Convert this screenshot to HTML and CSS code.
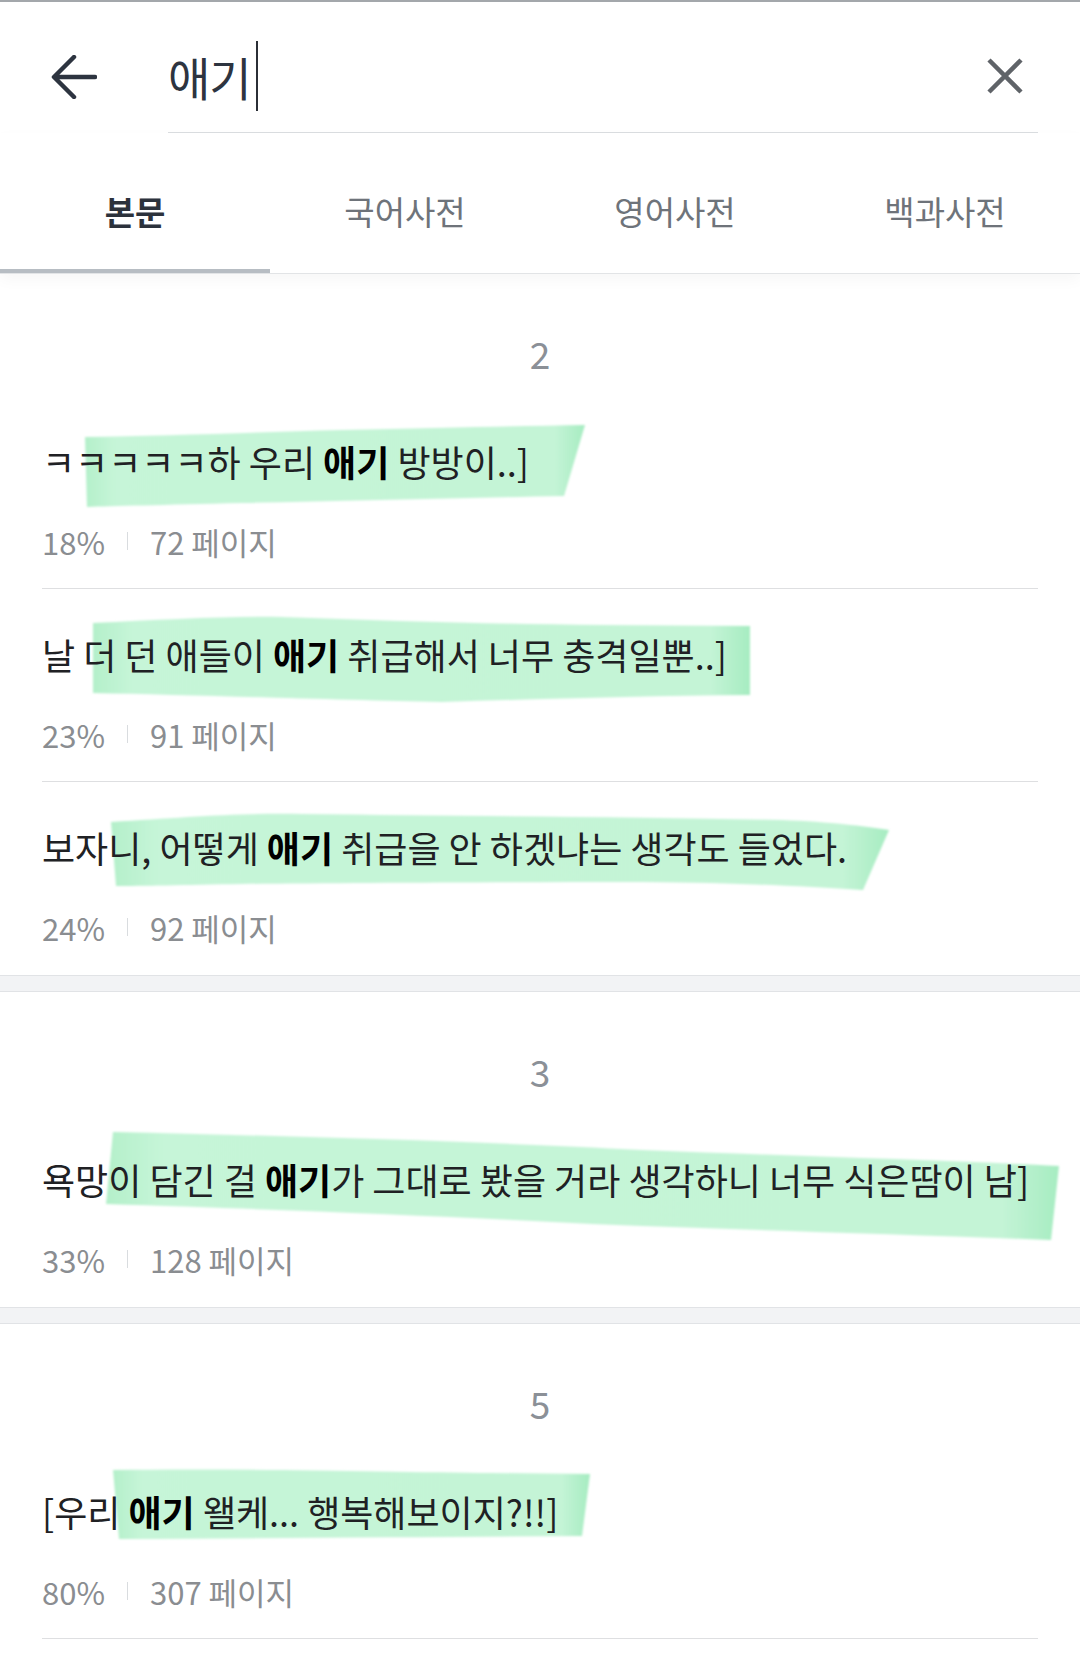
FILE: index.html
```html
<!DOCTYPE html>
<html>

<head>
  <title>본문 검색</title>
  <meta charset="UTF-8">
  <link rel="stylesheet" href="styles.css">
</head>

<body>
  <div class="screen">

    <div class="header">
      <div class="backBtn">
        <svg width="46" height="44" viewBox="0 0 46 44">
          <path d="M44 22 H4 M23 2 L3 22 L23 42" fill="none" stroke="#2d3440" stroke-width="4.5" stroke-linecap="round" stroke-linejoin="round" />
        </svg>
      </div>
      <div class="searchField">
        <span class="query">애기</span><span class="cursor"></span>
        <svg class="clearBtn" width="38" height="38" viewBox="0 0 38 38">
          <path d="M3 3 L35 35 M35 3 L3 35" stroke="#5f6368" stroke-width="4.5" />
        </svg>
      </div>
    </div>

    <div class="tabs">
      <div class="tab active">본문</div>
      <div class="tab">국어사전</div>
      <div class="tab">영어사전</div>
      <div class="tab">백과사전</div>
    </div>

    <!-- chapter 2 -->
    <div class="section">
      <div class="pageNum">2</div>
      <div class="item">
        <div class="line">
          <svg class="mark"><path d="M43 1 C120 0 220 -4 300 -6 C400 -8 480 -10 543 -11 L522 60 C420 62 300 65 200 67 C120 69 70 70 45 71 Z" /></svg>
          ㅋㅋㅋㅋㅋ하 우리 <b>애기</b> 방방이..]
        </div>
        <div class="meta"><span>18%</span><span class="bar"></span><span>72 페이지</span></div>
      </div>
      <div class="item">
        <div class="line">
          <svg class="mark"><path d="M51 -6 C120 -9 180 -13 240 -12 C350 -8 450 -5 560 -4 L708 -3 L708 66 C600 67 500 70 400 73 C300 71 150 66 51 64 Z" /></svg>
          날 더 던 애들이 <b>애기</b> 취급해서 너무 충격일뿐..]
        </div>
        <div class="meta"><span>23%</span><span class="bar"></span><span>91 페이지</span></div>
      </div>
      <div class="item">
        <div class="line">
          <svg class="mark"><path d="M69 0 C140 -4 190 -9 260 -8 C420 -6 600 -5 740 -2 C790 0 820 4 847 8 L821 68 C760 64 700 61 600 60 C450 60 300 61 200 62 C140 63 100 64 74 64 Z" /></svg>
          보자니, 어떻게 <b>애기</b> 취급을 안 하겠냐는 생각도 들었다.
        </div>
        <div class="meta"><span>24%</span><span class="bar"></span><span>92 페이지</span></div>
      </div>
    </div>

    <div class="band"></div>

    <!-- chapter 3 -->
    <div class="section">
      <div class="pageNum">3</div>
      <div class="item">
        <div class="line">
          <svg class="mark"><path d="M71 -22 C250 -18 450 -12 600 -4 C750 2 900 6 1017 12 L1009 86 C850 80 700 76 550 70 C400 62 250 56 64 50 Z" /></svg>
          욕망이 담긴 걸 <b>애기</b>가 그대로 봤을 거라 생각하니 너무 식은땀이 남]
        </div>
        <div class="meta"><span>33%</span><span class="bar"></span><span>128 페이지</span></div>
      </div>
    </div>

    <div class="band"></div>

    <!-- chapter 5 -->
    <div class="section">
      <div class="pageNum">5</div>
      <div class="item">
        <div class="line">
          <svg class="mark"><path d="M71 -16 C200 -18 350 -14 450 -13 L548 -12 L540 50 C400 51 250 52 77 53 Z" /></svg>
          [우리 <b>애기</b> 왤케... 행복해보이지?!!]
        </div>
        <div class="meta"><span>80%</span><span class="bar"></span><span>307 페이지</span></div>
      </div>
    </div>

  </div>

  <svg width="0" height="0" class="defs">
    <defs>
      <linearGradient id="marker" x1="0" y1="0" x2="1" y2="0">
        <stop offset="0" stop-color="#b4f0ca" />
        <stop offset="0.06" stop-color="#c6f5d8" />
        <stop offset="0.94" stop-color="#c4f4d6" />
        <stop offset="1" stop-color="#a6ecc1" />
      </linearGradient>
      <filter id="soft" x="-5%" y="-20%" width="110%" height="140%">
        <feGaussianBlur stdDeviation="1.2" />
      </filter>
    </defs>
  </svg>
</body>

</html>
```

FILE: styles.css
```css
body {
  margin: 0;
  background: #ffffff;
  font-family: "Noto Sans CJK KR", "Noto Sans", sans-serif;
}

.screen {
  width: 1080px;
  border-top: 2px solid #a3a7ab;
}

.header {
  display: flex;
  align-items: center;
  height: 131px;
  padding-top: 18px;
  box-sizing: border-box;
}

.backBtn {
  width: 168px;
  padding-left: 51px;
  box-sizing: border-box;
  display: flex;
}

.searchField {
  flex: 1;
  margin-right: 42px;
  height: 100%;
  display: flex;
  align-items: center;
  border-bottom: 1px solid #dadde0;
  box-sizing: border-box;
}

.query {
  font-size: 46px;
  color: #2d3440;
  letter-spacing: -1px;
}

.cursor {
  width: 2px;
  height: 70px;
  margin-left: 5px;
  background: #2b2f36;
}

.clearBtn {
  margin-left: auto;
  margin-right: 14px;
}

.tabs {
  display: flex;
  border-bottom: 1px solid #e2e4e6;
  box-shadow: 0 6px 14px rgba(0, 0, 0, 0.035);
  position: relative;
}

.tab {
  flex: 1;
  height: 140px;
  padding-top: 20px;
  box-sizing: border-box;
  border-bottom: 4px solid transparent;
  display: flex;
  align-items: center;
  justify-content: center;
  font-size: 33px;
  color: #6e737a;
}

.tab.active {
  font-weight: bold;
  color: #2c323c;
  border-bottom-color: #b7bdc3;
}

.pageNum {
  height: 60px;
  line-height: 60px;
  margin-top: 49px;
  margin-bottom: 13px;
  text-align: center;
  font-size: 37px;
  color: #8b9097;
}

.item {
  margin: 0 42px;
  padding: 40px 0 27px 0;
  border-bottom: 1px solid #dedfe1;
}

.item:last-child {
  border-bottom: none;
  padding-bottom: 28px;
}

.section:last-child .item:last-child {
  border-bottom: 1px solid #dedfe1;
  padding-bottom: 27px;
}

.line {
  position: relative;
  z-index: 0;
  height: 50px;
  line-height: 50px;
  font-size: 36px;
  color: #202124;
  white-space: nowrap;
}

.line b {
  color: #000000;
}

.mark {
  position: absolute;
  left: 0;
  top: 0;
  width: 1px;
  height: 1px;
  overflow: visible;
  z-index: -1;
}

.mark path {
  fill: url(#marker);
  filter: url(#soft);
}

.meta {
  display: flex;
  align-items: center;
  height: 40px;
  margin-top: 35px;
  font-size: 31px;
  color: #8a8d91;
}

.bar {
  width: 1px;
  height: 18px;
  margin: 0 22px;
  background: #d9dcdf;
}

.band {
  height: 15px;
  background: #f2f3f5;
  border-top: 1px solid #e1e3e6;
  border-bottom: 1px solid #e1e3e6;
}

.defs {
  position: absolute;
}
```
